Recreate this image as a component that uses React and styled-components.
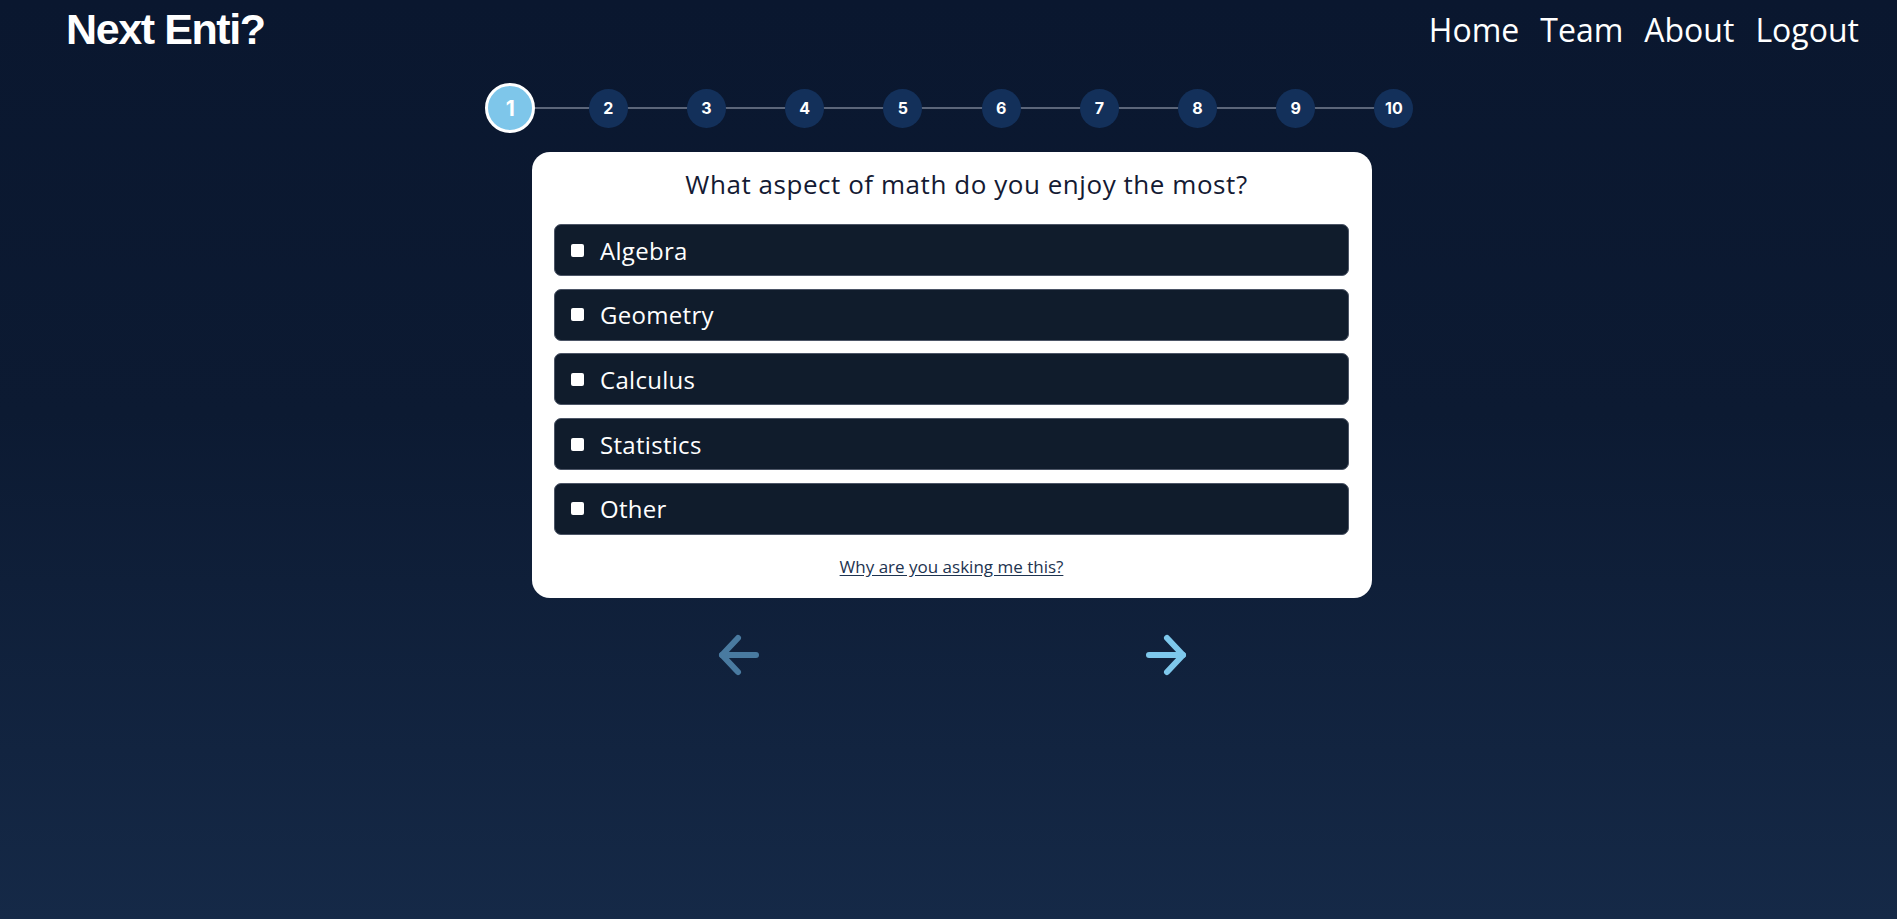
import React, { useState } from "react";
import styled, { createGlobalStyle } from "styled-components";

const GlobalStyle = createGlobalStyle`
  html, body { margin: 0; padding: 0; }
  body {
    font-family: "Open Sans", "Liberation Sans", sans-serif;
    background: #0b1830;
  }
  * { box-sizing: border-box; }
`;

const Page = styled.div`
  min-height: 100vh;
  background: linear-gradient(to bottom, #0a172f 0%, #0c1a32 45%, #152947 100%);
  color: #fff;
`;

const Header = styled.header`
  height: 60px;
  display: flex;
  align-items: center;
  justify-content: space-between;
  padding: 0 38px 0 66px;
`;

const Brand = styled.div`
  font-family: "Liberation Sans", Arial, sans-serif;
  font-weight: 700;
  font-size: 43px;
  letter-spacing: -1.4px;
  color: #fff;
  margin-top: -2px;
`;

const Nav = styled.nav`
  display: flex;
  gap: 21px;
  margin-top: -2px;
`;

const NavLink = styled.a`
  font-size: 32px;
  color: #fff;
  text-decoration: none;
  cursor: pointer;
`;

const Main = styled.main`
  display: flex;
  flex-direction: column;
  align-items: center;
  padding-left: 7px;
`;

const Stepper = styled.ol`
  list-style: none;
  margin: 0;
  padding: 0;
  display: grid;
  grid-template-columns: repeat(10, 98.2px);
  height: 56px;
  align-items: center;
  margin-top: 20px;
`;

const Step = styled.li`
  position: relative;
  display: flex;
  justify-content: center;
  align-items: center;
  &:not(:last-child)::after {
    content: "";
    position: absolute;
    left: 50%;
    width: 100%;
    top: 50%;
    height: 2px;
    margin-top: -1px;
    background: #5b6579;
    z-index: 0;
  }
`;

const Dot = styled.span`
  position: relative;
  z-index: 1;
  width: ${(p) => (p.$active ? "50px" : "39px")};
  height: ${(p) => (p.$active ? "50px" : "39px")};
  border-radius: 50%;
  background: ${(p) => (p.$active ? "#7ec6ea" : "#13305a")};
  border: ${(p) => (p.$active ? "3px solid #ffffff" : "none")};
  display: flex;
  align-items: center;
  justify-content: center;
  font-family: Inter, "Noto Sans", sans-serif;
  font-weight: 700;
  font-size: ${(p) => (p.$active ? "21px" : "16px")};
  color: #fff;
`;

const Card = styled.section`
  width: 840px;
  margin-top: 16px;
  background: #fff;
  border-radius: 18px;
  padding: 14px 23px 20px 22px;
`;

const Question = styled.h2`
  margin: 0 0 22px;
  padding-left: 30px;
  text-align: center;
  font-weight: 500;
  font-size: 26px;
  line-height: 36px;
  color: #141a33;
  letter-spacing: 0.55px;
`;

const Options = styled.div`
  display: flex;
  flex-direction: column;
  gap: 12.7px;
`;

const Option = styled.label`
  height: 52px;
  display: flex;
  align-items: center;
  gap: 16px;
  padding-left: 16px;
  background: #101c2c;
  border: 1px solid #4c5566;
  border-radius: 7px;
  cursor: pointer;
  font-size: 24px;
  letter-spacing: 0.3px;
  color: #fff;
`;

const Box = styled.span`
  width: 13px;
  height: 13px;
  border-radius: 2px;
  background: ${(p) => (p.$checked ? "#7ec6ea" : "#ffffff")};
  flex-shrink: 0;
`;

const Why = styled.a`
  display: block;
  text-align: center;
  margin-top: 20px;
  font-size: 17px;
  color: #1d3350;
  text-decoration: underline;
  text-underline-offset: 2px;
  cursor: pointer;
`;

const Arrows = styled.div`
  width: 465px;
  margin-top: 38px;
  display: flex;
  justify-content: space-between;
`;

const ArrowBtn = styled.button`
  background: none;
  border: none;
  padding: 0;
  width: 38px;
  height: 38px;
  cursor: pointer;
  color: ${(p) => (p.$dim ? "#497aa0" : "#7ec8ec")};
  svg { display: block; overflow: visible; }
`;

const Arrow = ({ dir }) => (
  <svg width="38" height="38" viewBox="0 0 38 38">
    <g
      transform={dir === "right" ? "translate(38 0) scale(-1 1)" : undefined}
      fill="none"
      stroke="currentColor"
      strokeWidth="6"
      strokeLinecap="round"
      strokeLinejoin="round"
    >
      <path d="M18 2 L2 19 L18 36" />
      <path d="M2 19 H36" />
    </g>
  </svg>
);

const choices = ["Algebra", "Geometry", "Calculus", "Statistics", "Other"];

export default function App() {
  const [checked, setChecked] = useState([]);
  const toggle = (c) =>
    setChecked((prev) => (prev.includes(c) ? prev.filter((x) => x !== c) : [...prev, c]));

  return (
    <Page>
      <GlobalStyle />
      <Header>
        <Brand>Next Enti?</Brand>
        <Nav>
          <NavLink>Home</NavLink>
          <NavLink>Team</NavLink>
          <NavLink>About</NavLink>
          <NavLink>Logout</NavLink>
        </Nav>
      </Header>
      <Main>
        <Stepper>
          {Array.from({ length: 10 }, (_, i) => (
            <Step key={i}>
              <Dot $active={i === 0}>{i + 1}</Dot>
            </Step>
          ))}
        </Stepper>
        <Card>
          <Question>What aspect of math do you enjoy the most?</Question>
          <Options>
            {choices.map((c) => (
              <Option key={c} onClick={() => toggle(c)}>
                <Box $checked={checked.includes(c)} />
                {c}
              </Option>
            ))}
          </Options>
          <Why>Why are you asking me this?</Why>
        </Card>
        <Arrows>
          <ArrowBtn $dim aria-label="Previous">
            <Arrow dir="left" />
          </ArrowBtn>
          <ArrowBtn aria-label="Next">
            <Arrow dir="right" />
          </ArrowBtn>
        </Arrows>
      </Main>
    </Page>
  );
}
